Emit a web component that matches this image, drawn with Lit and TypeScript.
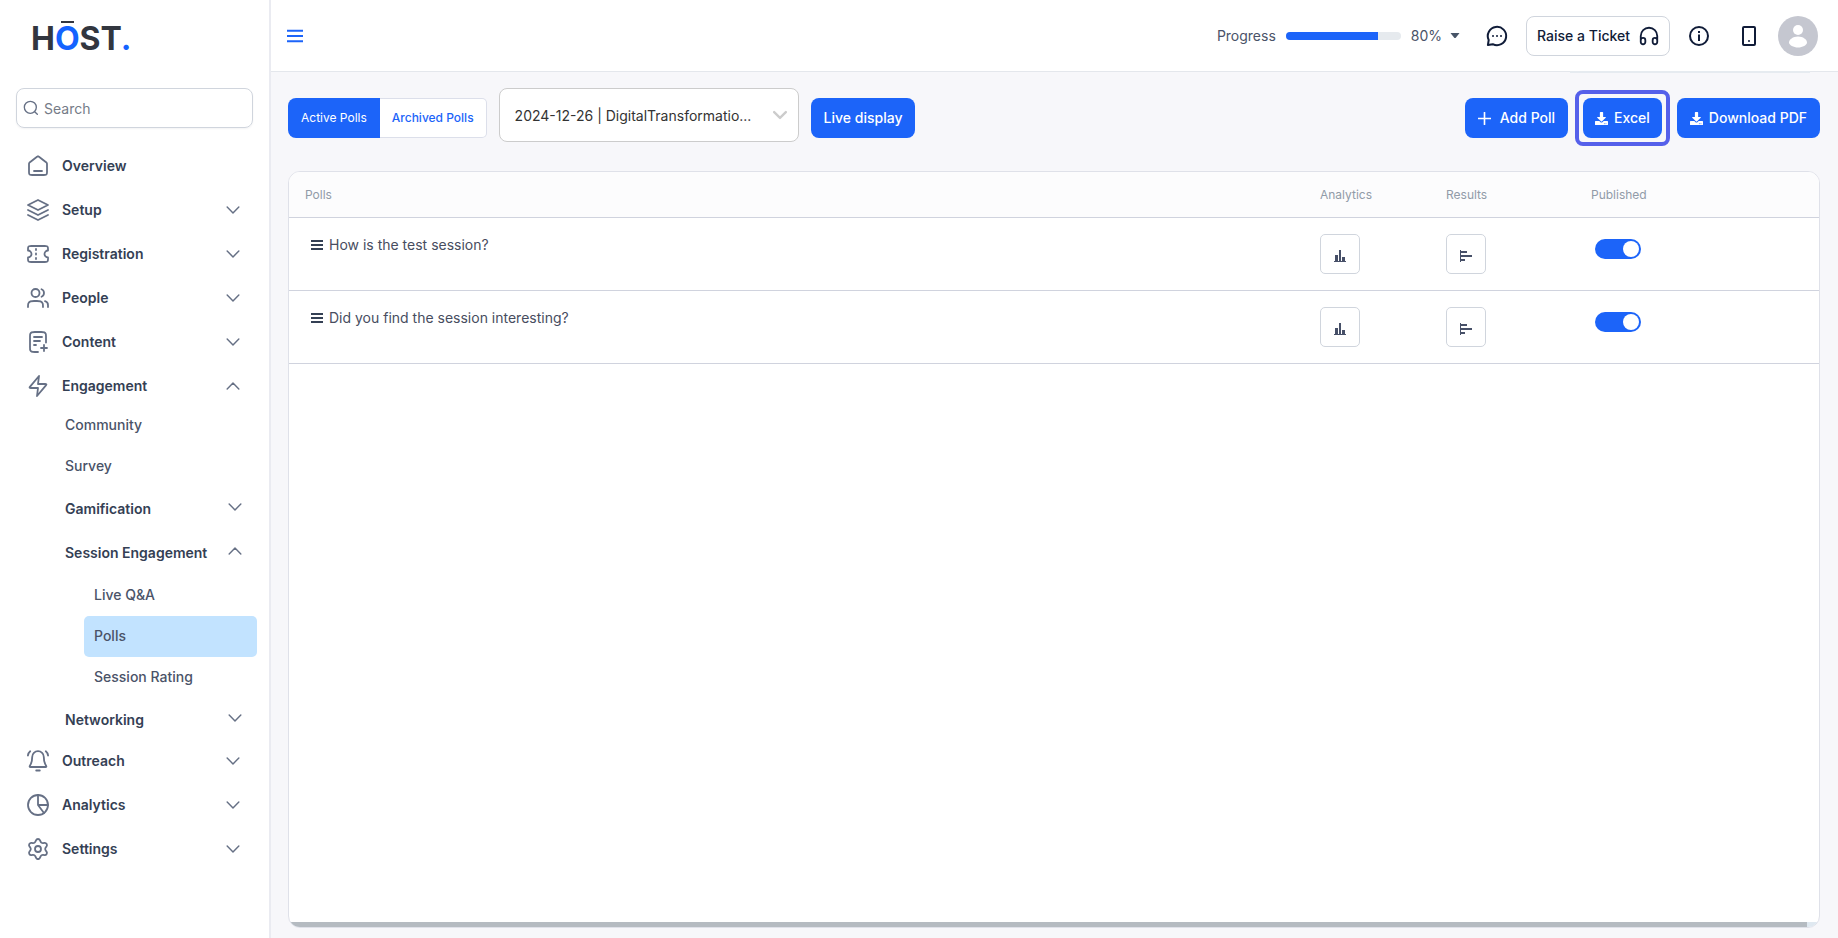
import { LitElement, html, svg, css, nothing } from "lit";
import { customElement, property, state } from "lit/decorators.js";
import { classMap } from "lit/directives/class-map.js";

const glyphs: Record<string, unknown> = {
  home: svg`<path d="M8 17h8M11.02 2.76 4.24 8.04c-.46.36-.68.53-.85.75a2 2 0 0 0-.32.65C3 9.7 3 9.99 3 10.56V17.8c0 1.12 0 1.68.22 2.11.19.38.5.68.87.87.43.22.99.22 2.11.22h11.6c1.12 0 1.68 0 2.11-.22.38-.19.68-.49.87-.87.22-.43.22-.99.22-2.11v-7.24c0-.57 0-.86-.07-1.12a2 2 0 0 0-.32-.65c-.17-.22-.39-.39-.85-.75l-6.78-5.28c-.35-.27-.52-.41-.72-.46a1 1 0 0 0-.52 0c-.2.05-.37.19-.72.46Z"/>`,
  layers: svg`<path d="M12 2 2 7l10 5 10-5-10-5ZM2 12l10 5 10-5M2 17l10 5 10-5"/>`,
  ticket: svg`<path d="M10 8V7M10 12.5v-1M10 17v-1M5.2 4h13.6c1.12 0 1.68 0 2.11.22.38.19.68.5.87.87.22.43.22.99.22 2.11v1.3a3.5 3.5 0 0 0 0 7v1.3c0 1.12 0 1.68-.22 2.11-.19.38-.49.68-.87.87-.43.22-.99.22-2.11.22H5.2c-1.12 0-1.68 0-2.11-.22a2 2 0 0 1-.87-.87C2 18.48 2 17.92 2 16.8v-1.3a3.5 3.5 0 0 0 0-7V7.2c0-1.12 0-1.68.22-2.11.19-.38.49-.68.87-.87C3.52 4 4.08 4 5.2 4Z"/>`,
  people: svg`<path d="M22 21v-2c0-1.86-1.27-3.43-3-3.87M15.5 3.29a4 4 0 0 1 0 7.42M17 21c0-1.86 0-2.8-.3-3.53a4 4 0 0 0-2.17-2.17C13.8 15 12.86 15 11 15H8c-1.86 0-2.8 0-3.53.3a4 4 0 0 0-2.17 2.17C2 18.2 2 19.14 2 21M13.5 7a4 4 0 1 1-8 0 4 4 0 0 1 8 0Z"/>`,
  file: svg`<path d="M20 12.5V6.8c0-1.68 0-2.52-.33-3.16a3 3 0 0 0-1.31-1.31C17.72 2 16.88 2 15.2 2H8.8c-1.68 0-2.52 0-3.16.33a3 3 0 0 0-1.31 1.31C4 4.28 4 5.12 4 6.8v10.4c0 1.68 0 2.52.33 3.16a3 3 0 0 0 1.31 1.31C6.28 22 7.12 22 8.8 22H12M14 11H8M10 15H8M16 7H8M18 21v-6M15 18h6"/>`,
  zap: svg`<path d="M13 2 4.09 12.69c-.35.42-.52.63-.52.81a.5.5 0 0 0 .18.39c.14.11.41.11.96.11H12l-1 8 8.91-10.69c.35-.42.52-.63.52-.81a.5.5 0 0 0-.18-.39c-.14-.11-.41-.11-.96-.11H12l1-8Z"/>`,
  bell: svg`<path d="M10.2 21.5h3.6M12 2.2A5.8 5.8 0 0 0 6.2 8c0 4.2-1.2 7-2.3 8.7-.5.8-.3 1.3.5 1.3h15.2c.8 0 1-.5.5-1.3-1.1-1.7-2.3-4.5-2.3-8.7A5.8 5.8 0 0 0 12 2.2ZM1.9 6.5c.3-1.7 1-3.1 2.3-4.2M22.1 6.5c-.3-1.7-1-3.1-2.3-4.2"/>`,
  pie: svg`<circle cx="12" cy="12" r="10"/><path d="M12 2v10h10M12 12l6 8"/>`,
  gear: svg`<circle cx="12" cy="12" r="3"/><path d="m9.395 19.371.585 1.315c.174.391.457.723.816.957a2.214 2.214 0 0 0 2.412 0c.359-.234.642-.566.816-.957l.584-1.315c.208-.466.558-.855 1-1.111a2.48 2.48 0 0 1 1.47-.312l1.43.152a2.211 2.211 0 0 0 2.149-1.094 2.211 2.211 0 0 0-.126-2.408l-.847-1.164A2.431 2.431 0 0 1 19.224 12c0-.513.162-1.014.464-1.429l.847-1.163A2.211 2.211 0 0 0 20.662 7a2.211 2.211 0 0 0-2.149-1.094l-1.43.152a2.48 2.48 0 0 1-1.47-.312 2.455 2.455 0 0 1-1-1.117l-.589-1.315a2.214 2.214 0 0 0-4.044 0l-.585 1.315a2.455 2.455 0 0 1-1 1.117 2.48 2.48 0 0 1-1.47.312l-1.434-.152A2.211 2.211 0 0 0 3.342 7a2.211 2.211 0 0 0 .126 2.408l.847 1.163a2.431 2.431 0 0 1 0 2.858l-.847 1.163A2.211 2.211 0 0 0 3.342 17a2.211 2.211 0 0 0 2.149 1.094l1.43-.152a2.48 2.48 0 0 1 1.47.312c.444.257.796.648 1.004 1.117Z"/>`,
  search: svg`<circle cx="11" cy="11" r="9"/><path d="m21.5 21.5-4-4"/>`,
  down: svg`<path d="m2 7 10 10L22 7"/>`,
  up: svg`<path d="m2 17 10-10 10 10"/>`,
  bars: svg`<path d="M0 4h24M0 12h24M0 20h24"/>`,
  plus: svg`<path d="M12 1v22M1 12h22"/>`,
  chat: svg`<path d="M2.9 21.1 3.7 16A9.2 9.2 0 1 1 7.8 20.2Z"/><path d="M8 12h.01M12 12h.01M16 12h.01"/>`,
  headphones: svg`<path d="M21 18v-6a9 9 0 1 0-18 0v6M5.5 21A2.5 2.5 0 0 1 3 18.5v-2a2.5 2.5 0 0 1 5 0v2A2.5 2.5 0 0 1 5.5 21ZM18.5 21a2.5 2.5 0 0 1-2.5-2.5v-2a2.5 2.5 0 0 1 5 0v2a2.5 2.5 0 0 1-2.5 2.5Z"/>`,
  info: svg`<circle cx="12" cy="12" r="9"/><path stroke-linecap="butt" d="M12 10.5V17M12 7v2"/>`,
  phone: svg`<rect x="6" y="3" width="12" height="18" rx="1"/><path d="M12 17h.01"/>`,
};

const icon = (name: string, cls = "") =>
  html`<svg class="icon ${cls}" viewBox="0 0 24 24" aria-hidden="true">${glyphs[name]}</svg>`;

const downloadIcon = html`<svg class="solid" viewBox="0 0 512 512" aria-hidden="true">
  <path d="M216 0h80c13.3 0 24 10.7 24 24v168h87.7c17.8 0 26.7 21.5 14.1 34.1L269.7 378.3c-7.5 7.5-19.8 7.5-27.3 0L90.1 226.1c-12.6-12.6-3.7-34.1 14.1-34.1H192V24c0-13.3 10.7-24 24-24zm296 376v112c0 13.3-10.7 24-24 24H24c-13.3 0-24-10.7-24-24V376c0-13.3 10.7-24 24-24h146.7l49 49c20.1 20.1 52.5 20.1 72.6 0l49-49H488c13.3 0 24 10.7 24 24zm-124 88c0-11-9-20-20-20s-20 9-20 20 9 20 20 20 20-9 20-20zm64 0c0-11-9-20-20-20s-20 9-20 20 9 20 20 20 20-9 20-20z"/>
</svg>`;

const shared = css`
  :host, * { box-sizing: border-box; }
  button, input, select { font: inherit; color: inherit; margin: 0; }
  button { cursor: pointer; background: none; border: 0; padding: 0; }
  a { color: inherit; text-decoration: none; }
  .icon {
    display: block;
    flex: none;
    width: 24px;
    height: 24px;
    fill: none;
    stroke: currentColor;
    stroke-width: 1.8;
    stroke-linecap: round;
    stroke-linejoin: round;
  }
`;

interface NavEntry {
  label: string;
  icon?: string;
  open?: boolean;
  current?: boolean;
  group?: boolean;
  children?: NavEntry[];
}

const navigation: NavEntry[] = [
  { label: "Overview", icon: "home" },
  { label: "Setup", icon: "layers", group: true },
  { label: "Registration", icon: "ticket", group: true },
  { label: "People", icon: "people", group: true },
  { label: "Content", icon: "file", group: true },
  {
    label: "Engagement", icon: "zap", group: true, open: true,
    children: [
      { label: "Community" },
      { label: "Survey" },
      { label: "Gamification", group: true },
      {
        label: "Session Engagement", group: true, open: true,
        children: [
          { label: "Live Q&A" },
          { label: "Polls", current: true },
          { label: "Session Rating" },
        ],
      },
      { label: "Networking", group: true },
    ],
  },
  { label: "Outreach", icon: "bell", group: true },
  { label: "Analytics", icon: "pie", group: true },
  { label: "Settings", icon: "gear", group: true },
];

@customElement("side-nav")
class SideNav extends LitElement {
  @state() entries = navigation;

  static styles = [shared, css`
    :host {
      display: block;
      width: 271px;
      flex: none;
      background: #fff;
      border-right: 2px solid #eaebf1;
      overflow: hidden;
    }
    .logo {
      display: block;
      width: max-content;
      margin: 19px 0 0 31px;
      font-size: 32px;
      line-height: 40px;
      font-weight: 700;
      color: #32363f;
    }
    .accent { color: #1463ff; }
    .macron { position: relative; }
    .macron::before {
      content: "";
      position: absolute;
      left: 6px;
      right: 6px;
      top: 2px;
      height: 2px;
      background: #32363f;
    }
    .search {
      display: flex;
      align-items: center;
      gap: 5px;
      height: 40px;
      margin: 29px 16px 19px;
      padding: 0 6px;
      border: 1px solid #d0d5dd;
      border-radius: 8px;
      box-shadow: 0 1px 2px rgba(16, 24, 40, 0.05);
      color: #667085;
    }
    .search .icon { width: 16px; height: 16px; stroke-width: 2; }
    .search input {
      flex: 1;
      min-width: 0;
      border: 0;
      outline: 0;
      padding: 2px 0 0;
      background: none;
      line-height: 20px;
    }
    .search input::placeholder { color: #757b87; opacity: 1; }
    ul { list-style: none; margin: 0; padding: 0; }
    .top { margin-bottom: 6px; }
    .top.open { margin-bottom: 0; }
    .head {
      display: flex;
      align-items: center;
      width: 100%;
      text-align: left;
      font-weight: 600;
      color: #344054;
    }
    .head .text { flex: 1; }
    .head .icon { color: #667085; }
    .head .chevron { width: 14px; height: 14px; stroke-width: 2.5; }
    .level1 { height: 38px; padding: 0 29px 0 26px; gap: 12px; }
    .level2 { height: 44px; padding: 0 27px 0 65px; }
    .level2 .chevron { margin-bottom: 4px; }
    .leaf {
      display: flex;
      align-items: center;
      height: 41px;
      margin: 0 12px 0 55px;
      padding: 0 10px 1px;
      font-weight: 500;
      color: #4a5368;
      border-radius: 5px;
    }
    .nested .leaf { margin-left: 84px; }
    .leaf.current { background: #c2e3ff; }
  `];

  private renderEntry(entry: NavEntry, level: number): unknown {
    if (level > 1 && !entry.group) {
      return html`<li>
        <a class=${classMap({ leaf: true, current: !!entry.current })} href="#"
          aria-current=${entry.current ? "page" : nothing}>${entry.label}</a>
      </li>`;
    }
    const body = html`${entry.icon ? icon(entry.icon) : nothing}<span class="text">${entry.label}</span>`;
    return html`<li class=${classMap({ top: level === 1, open: !!entry.open })}>
      ${entry.group
        ? html`<button class="head level${level}" aria-expanded=${entry.open ? "true" : "false"}
            @click=${() => { entry.open = !entry.open; this.requestUpdate(); }}>
            ${body}${icon(entry.open ? "up" : "down", "chevron")}
          </button>`
        : html`<a class="head level${level}" href="#">${body}</a>`}
      ${entry.open && entry.children
        ? html`<ul class=${level > 1 ? "nested" : ""}>${entry.children.map((c) => this.renderEntry(c, level + 1))}</ul>`
        : nothing}
    </li>`;
  }

  render() {
    return html`
      <a class="logo" href="#">H<span class="accent macron">O</span>ST<span class="accent">.</span></a>
      <label class="search">${icon("search")}<input type="search" placeholder="Search" aria-label="Search" /></label>
      <nav><ul>${this.entries.map((e) => this.renderEntry(e, 1))}</ul></nav>
    `;
  }
}

@customElement("top-bar")
class TopBar extends LitElement {
  @property({ type: Number }) progress = 80;

  static styles = [shared, css`
    :host {
      display: flex;
      align-items: center;
      position: relative;
      height: 72px;
      padding: 0 20px 0 16px;
      background: #fff;
      border-bottom: 1px solid #e4e7ec;
      color: #101c38;
    }
    .shelf {
      position: absolute;
      right: 28px;
      top: 71px;
      width: 240px;
      height: 2px;
      background: #e6ebf0;
    }
    .menu { color: #1c64f9; margin-right: auto; }
    .menu .icon { width: 16px; height: 16px; stroke-width: 3; stroke-linecap: butt; overflow: visible; }
    .progress { display: flex; align-items: center; gap: 10px; color: #4a5368; }
    progress {
      appearance: none;
      width: 115px;
      height: 8px;
      border: 0;
      border-radius: 4px;
      overflow: hidden;
      background: #e6eaee;
    }
    progress::-webkit-progress-bar { background: #e6eaee; }
    progress::-webkit-progress-value { background: #1c64f9; }
    .more { display: flex; align-items: center; gap: 8px; }
    .caret { width: 10px; height: 5px; fill: #475467; }
    .tool { margin-left: 25px; }
    .tool .icon, .ticket .icon { stroke-width: 2; }
    .ticket {
      display: flex;
      align-items: center;
      gap: 8px;
      height: 40px;
      margin-left: 17px;
      padding: 0 9px 0 10px;
      border: 1px solid #d0d5dd;
      border-radius: 8px;
      font-weight: 500;
    }
    .ticket .icon { width: 22px; height: 22px; }
    .info { margin-left: 17px; }
    .phone { margin-left: 26px; }
    .avatar { width: 40px; height: 40px; margin-left: 17px; }
    .avatar svg { display: block; }
  `];

  render() {
    return html`
      <button class="menu" aria-label="Toggle menu">${icon("bars")}</button>
      <div class="progress">
        <label for="setup-progress">Progress</label>
        <progress id="setup-progress" max="100" .value=${this.progress}></progress>
        <button class="more" aria-label="Progress details">${this.progress}%
          <svg class="caret" viewBox="0 0 10 5"><path d="M.5 0h9L6 4.4a1.3 1.3 0 0 1-2 0Z"/></svg>
        </button>
      </div>
      <button class="tool" aria-label="Messages">${icon("chat")}</button>
      <button class="ticket">Raise a Ticket ${icon("headphones")}</button>
      <button class="tool info" aria-label="Information">${icon("info")}</button>
      <button class="tool phone" aria-label="Mobile preview">${icon("phone")}</button>
      <button class="avatar" aria-label="Account">
        <svg viewBox="0 0 40 40" width="40" height="40">
          <circle cx="20" cy="20" r="20" fill="#c5c7d0"/>
          <circle cx="20" cy="14" r="5" fill="#fff"/>
          <path d="M20 20.5c5 0 9 3 9 6 0 2.500-4.500 5-9 5s-9-2.500-9-5c0-3 4-6 9-6Z" fill="#fff"/>
        </svg>
      </button>
      <div class="shelf"></div>
    `;
  }
}

@customElement("polls-toolbar")
class PollsToolbar extends LitElement {
  @state() tab = "active";

  static styles = [shared, css`
    :host {
      display: flex;
      align-items: flex-start;
      justify-content: space-between;
      padding: 16px 0 25px;
    }
    .left { display: flex; align-items: flex-start; gap: 12px; }
    .left > * { margin-top: 10px; }
    .tabs { display: flex; }
    .tab {
      height: 40px;
      padding: 0 12px;
      font-size: 12px;
      font-weight: 500;
      color: #1c64f9;
      background: #fff;
      border: 1px solid #dcdfea;
    }
    .tab:first-child { border-radius: 8px 0 0 8px; }
    .tab:last-child { border-radius: 0 5px 5px 0; border-left: 0; }
    .tab.on { padding: 0 13px; background: #1c64f9; border: 0; color: #fff; font-weight: 400; }
    .left .session { display: grid; width: 300px; margin-top: 0; }
    .session select, .session .icon { grid-area: 1 / 1; }
    .session select {
      appearance: none;
      width: 100%;
      height: 54px;
      padding: 1px 44px 0 15px;
      border: 1px solid #ccc;
      border-radius: 8px;
      background: #fff;
      color: #333;
      text-overflow: ellipsis;
    }
    .session .icon {
      justify-self: end;
      align-self: center;
      width: 14px;
      height: 14px;
      margin-right: 12px;
      stroke-width: 4;
      color: #ccc;
      pointer-events: none;
    }
    .right { display: flex; align-items: center; gap: 7px; margin-top: 2px; }
    .primary {
      display: flex;
      align-items: center;
      gap: 6px;
      height: 40px;
      padding: 0 13px;
      border-radius: 8px;
      background: #1c64f9;
      color: #fff;
      font-weight: 500;
    }
    .add { gap: 9px; }
    .add .icon { width: 13px; height: 13px; stroke-width: 3; }
    .solid { width: 13px; height: 13px; fill: currentColor; }
    .focus { padding: 4px; border: 4px solid #5560ea; border-radius: 8px; }
    .focus .primary { padding: 0 12px; }
  `];

  private renderTab(id: string, label: string) {
    return html`<button role="tab" class=${classMap({ tab: true, on: this.tab === id })}
      aria-selected=${this.tab === id ? "true" : "false"} @click=${() => (this.tab = id)}>${label}</button>`;
  }

  render() {
    return html`
      <div class="left">
        <div class="tabs" role="tablist">
          ${this.renderTab("active", "Active Polls")}${this.renderTab("archived", "Archived Polls")}
        </div>
        <label class="session">
          <select aria-label="Session"><option>2024-12-26 | DigitalTransformatio...</option></select>
          ${icon("down")}
        </label>
        <button class="primary">Live display</button>
      </div>
      <div class="right">
        <button class="primary add">${icon("plus")}Add Poll</button>
        <span class="focus"><button class="primary">${downloadIcon}Excel</button></span>
        <button class="primary">${downloadIcon}Download PDF</button>
      </div>
    `;
  }
}

@customElement("polls-table")
class PollsTable extends LitElement {
  @property({ attribute: false }) polls = [
    { question: "How is the test session?", published: true },
    { question: "Did you find the session interesting?", published: true },
  ];

  static styles = [shared, css`
    :host {
      display: flex;
      flex-direction: column;
      flex: 1;
      min-height: 0;
      border: 1px solid #dfe1e9;
      border-radius: 12px;
      background: #fff;
      overflow: hidden;
    }
    table { width: 100%; table-layout: fixed; border-collapse: separate; border-spacing: 0; }
    .analytics { width: 126px; }
    .results { width: 145px; }
    .published { width: 244px; }
    th {
      height: 46px;
      padding: 0 16px;
      text-align: left;
      font-size: 12px;
      font-weight: 400;
      color: #919ba8;
      background: #fcfcfd;
      border-bottom: 1px solid #d0d3de;
    }
    td {
      height: 73px;
      padding: 16px 16px 0;
      vertical-align: top;
      border-bottom: 1px solid #d0d3de;
    }
    .poll { display: flex; align-items: center; gap: 6px; padding-left: 6px; line-height: 22px; color: #474d60; }
    .poll .icon { width: 12px; height: 12px; stroke-width: 4; stroke-linecap: butt; color: #344054; }
    .square {
      display: flex;
      align-items: center;
      justify-content: center;
      width: 40px;
      height: 40px;
      padding-top: 4px;
      border: 1px solid #d0d5dd;
      border-radius: 5px;
    }
    .square svg { width: 12px; height: 12px; fill: #475068; }
    .switch { display: block; padding: 5px 0 0 4px; }
    .switch input {
      appearance: none;
      display: block;
      width: 46px;
      height: 20px;
      padding: 2px;
      border-radius: 10px;
      background: #c5c9d3;
    }
    .switch input::before {
      content: "";
      display: block;
      width: 16px;
      height: 16px;
      border-radius: 50%;
      background: #fff;
    }
    .switch input:checked { background: #1c64f9; }
    .switch input:checked::before { margin-left: auto; }
    .track { margin-top: auto; height: 5px; padding-right: 12px; background: #dfe8f0; }
    .thumb { height: 100%; background: #b5bbc1; }
  `];

  render() {
    return html`
      <table>
        <thead>
          <tr>
            <th scope="col">Polls</th>
            <th scope="col" class="analytics">Analytics</th>
            <th scope="col" class="results">Results</th>
            <th scope="col" class="published">Published</th>
          </tr>
        </thead>
        <tbody>
          ${this.polls.map((poll) => html`<tr>
            <td><div class="poll">${icon("bars")}<span>${poll.question}</span></div></td>
            <td><button class="square" aria-label="Analytics">
              <svg viewBox="0 0 12 12"><path d="M0 11h1V5h3v6h1V0h2v11h1V7h3v4h1v1H0Z"/></svg>
            </button></td>
            <td><button class="square" aria-label="Results">
              <svg viewBox="0 0 12 12"><path d="M0 0h1v1h6v2H1v2h11v2H1v2h4v2H1v1H0Z"/></svg>
            </button></td>
            <td><label class="switch"><input type="checkbox" role="switch" aria-label="Published" .checked=${poll.published} /></label></td>
          </tr>`)}
        </tbody>
      </table>
      <div class="track"><div class="thumb"></div></div>
    `;
  }
}

@customElement("app-root")
class AppRoot extends LitElement {
  static styles = css`
    :host {
      display: flex;
      height: 100vh;
      background: #f7f7fa;
      font-family: Inter, "Liberation Sans", sans-serif;
      font-size: 14px;
      line-height: 20px;
    }
    .page { flex: 1; min-width: 0; display: flex; flex-direction: column; }
    main {
      flex: 1;
      min-height: 0;
      display: flex;
      flex-direction: column;
      padding: 0 18px 10px 17px;
    }
  `;

  render() {
    return html`
      <side-nav></side-nav>
      <div class="page">
        <top-bar></top-bar>
        <main>
          <polls-toolbar></polls-toolbar>
          <polls-table></polls-table>
        </main>
      </div>
    `;
  }
}
